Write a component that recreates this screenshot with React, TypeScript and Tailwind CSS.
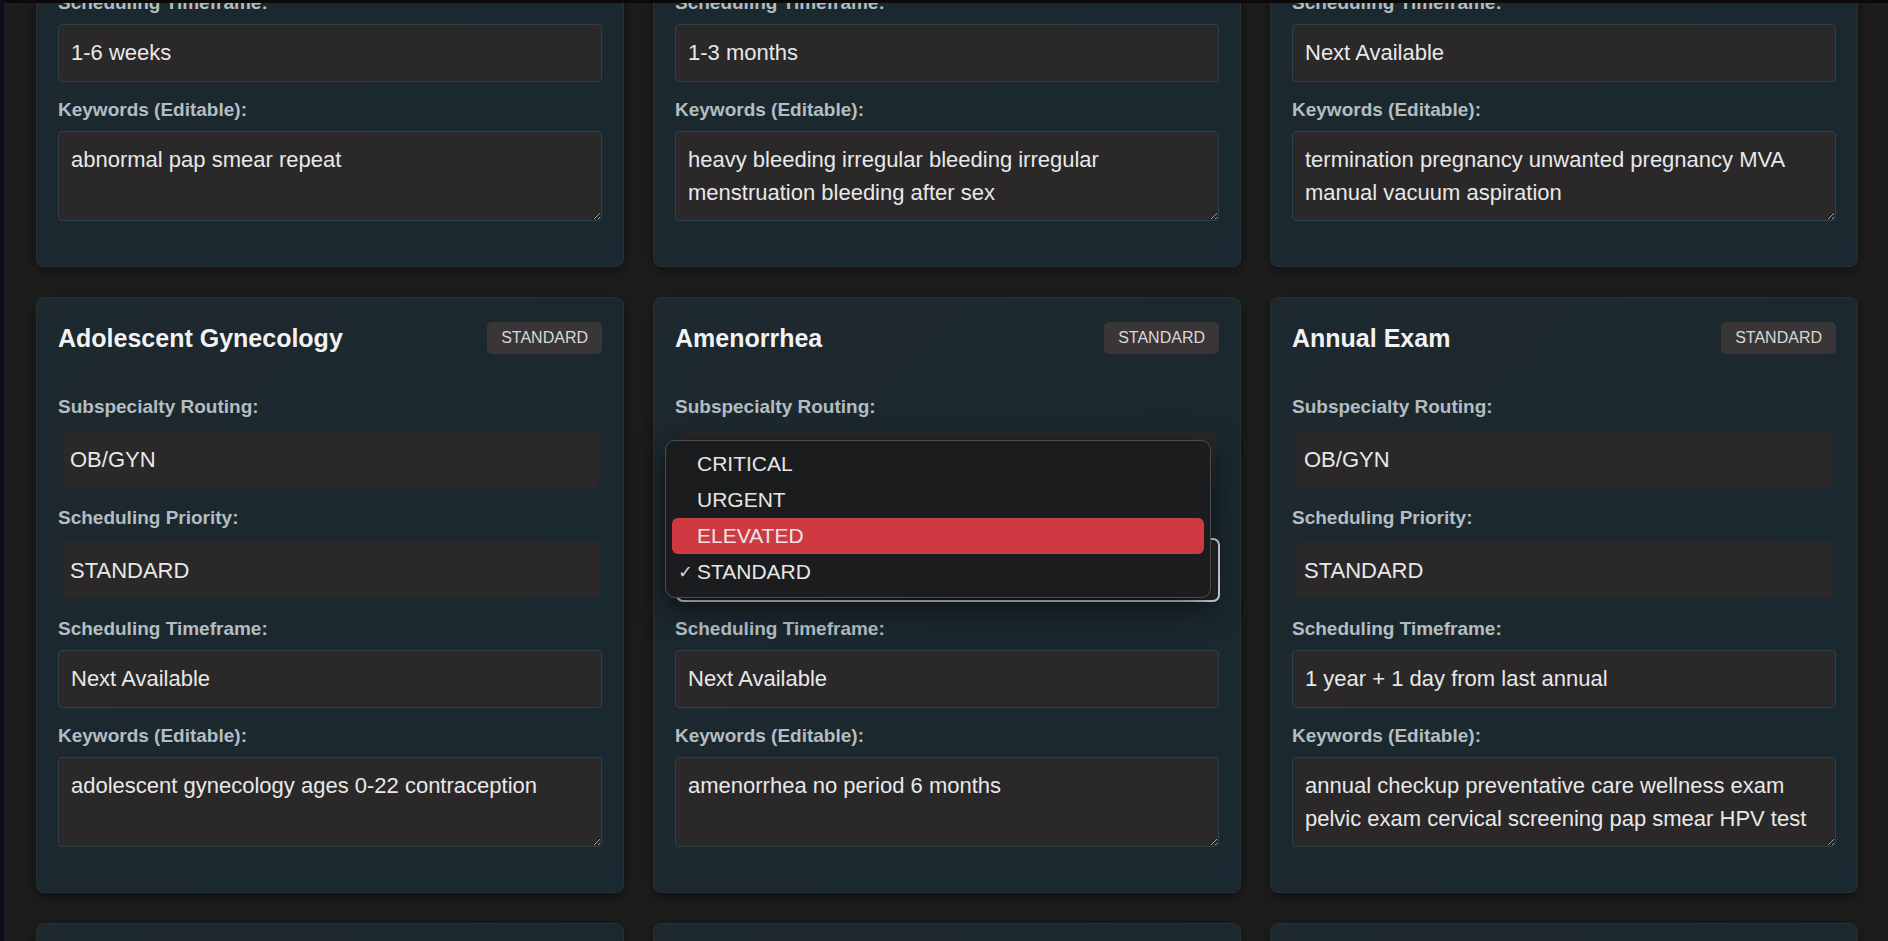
import { useState } from "react";

type Protocol = {
  title: string;
  badge: string;
  routing: string;
  priority: string;
  timeframe: string;
  keywords: string;
};

const PRIORITIES = ["CRITICAL", "URGENT", "ELEVATED", "STANDARD"];

const protocols: Protocol[] = [
  {
    title: "Abnormal Pap Smear",
    badge: "STANDARD",
    routing: "OB/GYN",
    priority: "STANDARD",
    timeframe: "1-6 weeks",
    keywords: "abnormal pap smear repeat",
  },
  {
    title: "Abnormal Uterine Bleeding",
    badge: "STANDARD",
    routing: "OB/GYN",
    priority: "STANDARD",
    timeframe: "1-3 months",
    keywords:
      "heavy bleeding irregular bleeding irregular menstruation bleeding after sex",
  },
  {
    title: "Abortion Services",
    badge: "ELEVATED",
    routing: "OB/GYN",
    priority: "ELEVATED",
    timeframe: "Next Available",
    keywords:
      "termination pregnancy unwanted pregnancy MVA manual vacuum aspiration",
  },
  {
    title: "Adolescent Gynecology",
    badge: "STANDARD",
    routing: "OB/GYN",
    priority: "STANDARD",
    timeframe: "Next Available",
    keywords: "adolescent gynecology ages 0-22 contraception",
  },
  {
    title: "Amenorrhea",
    badge: "STANDARD",
    routing: "OB/GYN",
    priority: "STANDARD",
    timeframe: "Next Available",
    keywords: "amenorrhea no period 6 months",
  },
  {
    title: "Annual Exam",
    badge: "STANDARD",
    routing: "OB/GYN",
    priority: "STANDARD",
    timeframe: "1 year + 1 day from last annual",
    keywords:
      "annual checkup preventative care wellness exam pelvic exam cervical screening pap smear HPV test",
  },
  {
    title: "Bartholin Cyst",
    badge: "STANDARD",
    routing: "OB/GYN",
    priority: "STANDARD",
    timeframe: "1-2 weeks",
    keywords: "bartholin cyst vulvar swelling",
  },
  {
    title: "Breast Concerns",
    badge: "STANDARD",
    routing: "OB/GYN",
    priority: "STANDARD",
    timeframe: "1-2 weeks",
    keywords: "breast lump breast pain nipple discharge",
  },
  {
    title: "Contraception",
    badge: "STANDARD",
    routing: "OB/GYN",
    priority: "STANDARD",
    timeframe: "Next Available",
    keywords: "birth control IUD implant pill patch ring",
  },
];

function Label({ children }: { children: React.ReactNode }) {
  return (
    <label className="block h-5 mb-[11px] text-[19px] leading-5 font-bold text-[#b3bdc2]">
      {children}
    </label>
  );
}

function PrioritySelect({
  value,
  options,
  focused,
}: {
  value: string;
  options: string[];
  focused?: boolean;
}) {
  return (
    <div className="pt-[3px] pb-[3px] pl-[5px] pr-[3px]">
      <select
        defaultValue={value}
        className={
          "appearance-none w-full h-[56px] pl-[7px] bg-[#2a2829] text-[22px] text-[#e8e8e8] rounded-[3px] " +
          (focused
            ? "outline-2 outline-offset-2 outline-[#e4e4e4]"
            : "outline-none")
        }
      >
        {options.map((o) => (
          <option key={o} value={o}>
            {o}
          </option>
        ))}
      </select>
    </div>
  );
}

function PriorityMenu({ selected, hovered }: { selected: string; hovered: string }) {
  return (
    <div className="absolute left-[11px] top-[142px] w-[546px] h-[158px] pt-[5px] pb-[7px] rounded-[10px] border border-[#4a4c4f] bg-[#1b1c1e] shadow-[0_10px_30px_rgba(0,0,0,0.6)] z-20">
      {PRIORITIES.map((p) => (
        <div
          key={p}
          className={
            "mx-[6px] h-[36px] flex items-center rounded-[6px] " +
            (p === hovered ? "bg-[#cf3a42]" : "")
          }
        >
          <span className="w-[25px] pl-[6px] text-[18px] leading-none text-[#d4d4d4] font-['DejaVu_Sans',sans-serif]">
            {p === selected ? "✓" : ""}
          </span>
          <span className="text-[21px] text-[#e6e6e6]">{p}</span>
        </div>
      ))}
    </div>
  );
}

function ProtocolCard({ p, open }: { p: Protocol; open?: boolean }) {
  return (
    <div className="relative rounded-lg border border-[#243136] bg-gradient-to-br from-[#1d292e] via-[#1b282e] to-[#1a2831] shadow-[0_4px_14px_rgba(0,0,0,0.45)] pt-[24px] px-[21px] pb-[45px]">
      <div className="flex items-center justify-between h-8 mb-[43px]">
        <h3 className="text-[25px] leading-8 font-bold text-[#f2f2f2]">
          {p.title}
        </h3>
        <span className="h-8 px-[14px] flex items-center rounded-[5px] bg-[#3a3637] text-[16px] text-[#d8d8d8]">
          {p.badge}
        </span>
      </div>
      <div className="flex flex-col gap-[18px]">
        <div>
          <Label>Subspecialty Routing:</Label>
          <PrioritySelect
            value={p.routing}
            options={["OB/GYN", "Gyn Oncology", "MFM", "REI", "Urogynecology"]}
          />
        </div>
        <div>
          <Label>Scheduling Priority:</Label>
          <PrioritySelect value={p.priority} options={PRIORITIES} focused={open} />
        </div>
        <div>
          <Label>Scheduling Timeframe:</Label>
          <input
            defaultValue={p.timeframe}
            className="block w-full h-[58px] px-[12px] rounded-[4px] border border-[#304048] bg-[#2a2829] text-[22px] leading-[33px] text-[#e8e8e8] outline-none"
          />
        </div>
        <div>
          <Label>Keywords (Editable):</Label>
          <textarea
            rows={2}
            defaultValue={p.keywords}
            className="block w-full h-[90px] px-[12px] py-[11px] rounded-[4px] border border-[#304048] bg-[#2a2829] text-[22px] leading-[33px] text-[#e8e8e8] outline-none [color-scheme:dark]"
          />
        </div>
      </div>
      {open && <PriorityMenu selected={p.priority} hovered="ELEVATED" />}
    </div>
  );
}

export default function App() {
  const [openIndex] = useState(4);

  return (
    <div className="h-screen overflow-hidden flex bg-[#1d1d1d] font-['Liberation_Sans',Arial,sans-serif]">
      <div className="w-[4px] shrink-0 bg-[#0e0c1b]" />
      <div className="flex-1 flex flex-col overflow-hidden">
        <div className="relative z-30 h-[3px] shrink-0 bg-[#0a0a0a]" />
        <div className="-mt-[332px] pl-[32px] pr-[30px] grid grid-cols-3 gap-x-[29px] gap-y-[30px]">
          {protocols.map((p, i) => (
            <ProtocolCard key={p.title} p={p} open={i === openIndex} />
          ))}
        </div>
      </div>
    </div>
  );
}
